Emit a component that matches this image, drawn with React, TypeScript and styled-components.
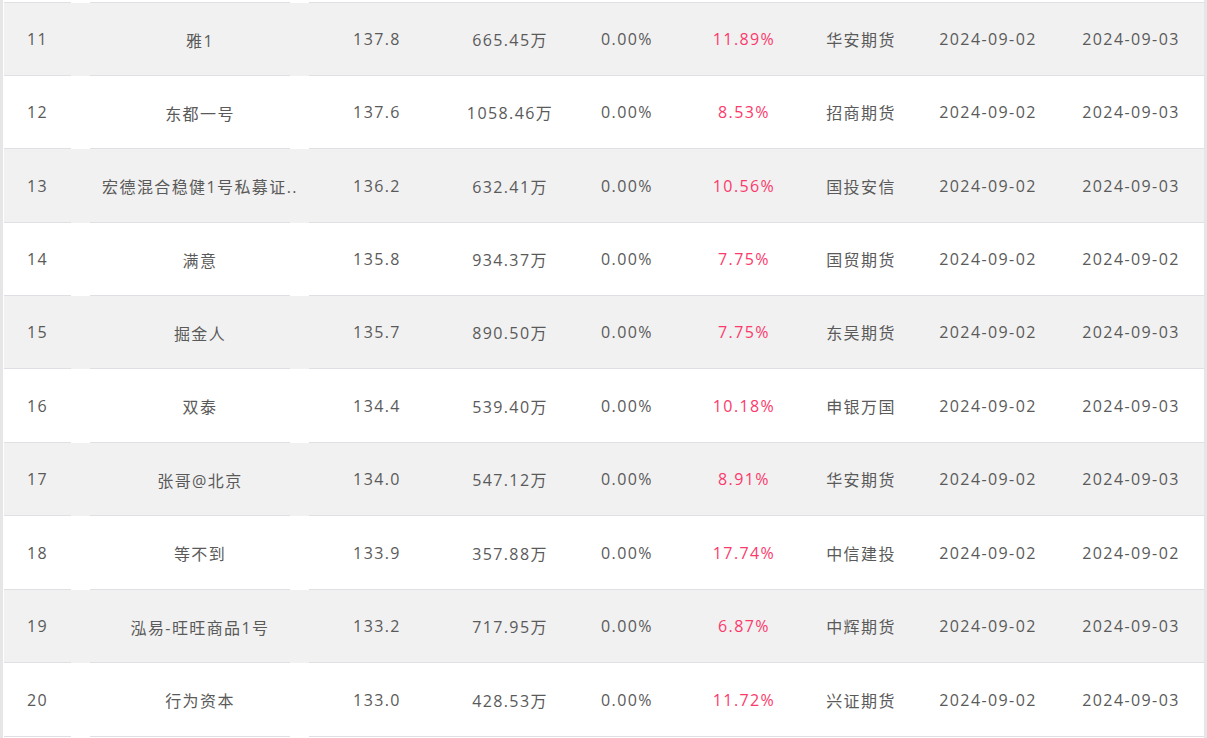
import React from "react";
import styled, { createGlobalStyle } from "styled-components";

const GlobalStyle = createGlobalStyle`
  html, body { margin: 0; padding: 0; background: #ffffff; }
  body { font-family: "Open Sans", "Noto Sans CJK SC", sans-serif; }
`;

const Frame = styled.div`
  width: 1207px;
  height: 738px;
  box-sizing: border-box;
  border-left: 3px solid #e6e6e6;
  border-right: 3px solid #e6e6e6;
  padding-left: 1px;
  background: #ffffff;
  overflow: hidden;
`;

const Table = styled.div`
  display: flex;
  flex-direction: column;
  width: 1200px;
`;

const COLS = "67px 258px 96px 170px 64px 170px 64px 190px 96px 25px";

const Row = styled.div<{ $shade: boolean; $h: number }>`
  display: grid;
  grid-template-columns: ${COLS};
  height: ${(p) => p.$h}px;
  background: ${(p) => (p.$shade ? "#f1f1f1" : "#ffffff")};
`;

const LINE = "#dfdfe4";

const Cell = styled.div<{ $red?: boolean }>`
  display: flex;
  align-items: center;
  justify-content: center;
  white-space: nowrap;
  font-size: 16px;
  letter-spacing: 1.4px;
  color: ${(p) => (p.$red ? "#fb3a6c" : "#5a5a5a")};
  border-bottom: 1px solid ${LINE};
  box-sizing: border-box;
`;

const NameCell = styled(Cell)`
  border-bottom: none;
  background-image: linear-gradient(
    to right,
    transparent 19px,
    ${LINE} 19px,
    ${LINE} 219px,
    transparent 219px,
    transparent 238px,
    ${LINE} 238px
  );
  background-size: 100% 1px;
  background-position: left bottom;
  background-repeat: no-repeat;
`;

const Gap = styled.div`
  border-bottom: 1px solid ${LINE};
  box-sizing: border-box;
`;

type Item = {
  rank: number;
  name: string;
  score: string;
  asset: string;
  fee: string;
  ret: string;
  broker: string;
  start: string;
  end: string;
};

const data: Item[] = [
  { rank: 11, name: "雅1", score: "137.8", asset: "665.45万", fee: "0.00%", ret: "11.89%", broker: "华安期货", start: "2024-09-02", end: "2024-09-03" },
  { rank: 12, name: "东都一号", score: "137.6", asset: "1058.46万", fee: "0.00%", ret: "8.53%", broker: "招商期货", start: "2024-09-02", end: "2024-09-03" },
  { rank: 13, name: "宏德混合稳健1号私募证..", score: "136.2", asset: "632.41万", fee: "0.00%", ret: "10.56%", broker: "国投安信", start: "2024-09-02", end: "2024-09-03" },
  { rank: 14, name: "满意", score: "135.8", asset: "934.37万", fee: "0.00%", ret: "7.75%", broker: "国贸期货", start: "2024-09-02", end: "2024-09-02" },
  { rank: 15, name: "掘金人", score: "135.7", asset: "890.50万", fee: "0.00%", ret: "7.75%", broker: "东吴期货", start: "2024-09-02", end: "2024-09-03" },
  { rank: 16, name: "双泰", score: "134.4", asset: "539.40万", fee: "0.00%", ret: "10.18%", broker: "申银万国", start: "2024-09-02", end: "2024-09-03" },
  { rank: 17, name: "张哥@北京", score: "134.0", asset: "547.12万", fee: "0.00%", ret: "8.91%", broker: "华安期货", start: "2024-09-02", end: "2024-09-03" },
  { rank: 18, name: "等不到", score: "133.9", asset: "357.88万", fee: "0.00%", ret: "17.74%", broker: "中信建投", start: "2024-09-02", end: "2024-09-02" },
  { rank: 19, name: "泓易-旺旺商品1号", score: "133.2", asset: "717.95万", fee: "0.00%", ret: "6.87%", broker: "中辉期货", start: "2024-09-02", end: "2024-09-03" },
  { rank: 20, name: "行为资本", score: "133.0", asset: "428.53万", fee: "0.00%", ret: "11.72%", broker: "兴证期货", start: "2024-09-02", end: "2024-09-03" },
];

// row boundaries measured from the reference (bottom border y positions)
const bottoms = [2, 75, 148, 222, 295, 368, 442, 515, 589, 662, 736];

export default function App() {
  return (
    <>
      <GlobalStyle />
      <Frame>
        <Table>
          <Row $shade={false} $h={3}>
            <Cell />
            <NameCell />
            <Cell />
            <Cell />
            <Cell />
            <Cell />
            <Cell />
            <Cell />
            <Cell />
            <Gap />
          </Row>
          {data.map((d, i) => (
            <Row key={d.rank} $shade={i % 2 === 0} $h={bottoms[i + 1] - bottoms[i]}>
              <Cell>{d.rank}</Cell>
              <NameCell>{d.name}</NameCell>
              <Cell>{d.score}</Cell>
              <Cell>{d.asset}</Cell>
              <Cell>{d.fee}</Cell>
              <Cell $red>{d.ret}</Cell>
              <Cell>{d.broker}</Cell>
              <Cell>{d.start}</Cell>
              <Cell>{d.end}</Cell>
              <Gap />
            </Row>
          ))}
        </Table>
      </Frame>
    </>
  );
}
